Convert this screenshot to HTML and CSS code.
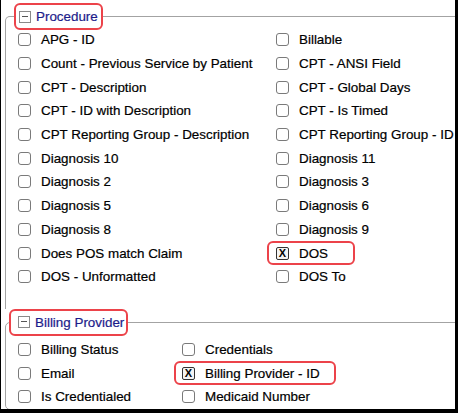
FILE: index.html
```html
<!DOCTYPE html>
<html lang="en">
<head>
  <meta charset="UTF-8">
  <title>Report Fields</title>
  <link rel="stylesheet" href="styles.css">
</head>
<body>
  <div class="frame">

    <fieldset class="group group-proc">
      <legend class="legend legend-proc"><span class="toggle"></span>Procedure</legend>
      <div class="fields fields-proc">
        <label class="item"><span class="cb"></span>APG - ID</label>
        <label class="item"><span class="cb"></span>Billable</label>
        <label class="item"><span class="cb"></span>Count - Previous Service by Patient</label>
        <label class="item"><span class="cb"></span>CPT - ANSI Field</label>
        <label class="item"><span class="cb"></span>CPT - Description</label>
        <label class="item"><span class="cb"></span>CPT - Global Days</label>
        <label class="item"><span class="cb"></span>CPT - ID with Description</label>
        <label class="item"><span class="cb"></span>CPT - Is Timed</label>
        <label class="item"><span class="cb"></span>CPT Reporting Group - Description</label>
        <label class="item"><span class="cb"></span>CPT Reporting Group - ID</label>
        <label class="item"><span class="cb"></span>Diagnosis 10</label>
        <label class="item"><span class="cb"></span>Diagnosis 11</label>
        <label class="item"><span class="cb"></span>Diagnosis 2</label>
        <label class="item"><span class="cb"></span>Diagnosis 3</label>
        <label class="item"><span class="cb"></span>Diagnosis 5</label>
        <label class="item"><span class="cb"></span>Diagnosis 6</label>
        <label class="item"><span class="cb"></span>Diagnosis 8</label>
        <label class="item"><span class="cb"></span>Diagnosis 9</label>
        <label class="item"><span class="cb"></span>Does POS match Claim</label>
        <label class="item mark mark-dos"><span class="cb checked">X</span>DOS</label>
        <label class="item"><span class="cb"></span>DOS - Unformatted</label>
        <label class="item"><span class="cb"></span>DOS To</label>
      </div>
    </fieldset>

    <fieldset class="group group-bill">
      <legend class="legend legend-bill"><span class="toggle"></span>Billing Provider</legend>
      <div class="fields fields-bill">
        <label class="item"><span class="cb"></span>Billing Status</label>
        <label class="item"><span class="cb"></span>Credentials</label>
        <label class="item"><span class="cb"></span>Email</label>
        <label class="item mark mark-bpid"><span class="cb checked">X</span>Billing Provider - ID</label>
        <label class="item"><span class="cb"></span>Is Credentialed</label>
        <label class="item"><span class="cb"></span>Medicaid Number</label>
      </div>
    </fieldset>

  </div>
</body>
</html>
```

FILE: styles.css
```css
* {
  box-sizing: border-box;
}

body {
  margin: 0;
  background: #fff;
  font-family: "Liberation Sans", Arial, sans-serif;
  color: #000;
}

.frame {
  width: 458px;
  height: 413px;
  overflow: hidden;
  border-left: 1px solid #000;
  border-right: 3px solid #000;
  border-bottom: 4px solid #000;
  padding-top: 3px;
}

.group {
  margin: 0 -20px 0 4px;
  padding: 0;
  border: 1px solid #a3a3a3;
  border-radius: 5px;
  min-width: 0;
}

.group-proc {
  border-bottom: none;
  border-bottom-left-radius: 0;
  padding-bottom: 20px;
}

.legend {
  display: flex;
  align-items: center;
  height: 27px;
  border: 2px solid #ec434a;
  border-radius: 6px;
  font-size: 13.4px;
  color: #1c1c8a;
  -webkit-text-stroke: 0.2px #1c1c8a;
}

.legend-proc {
  margin-left: 8px;
  padding: 0 3px 0 3px;
}

.legend-bill {
  margin-left: 3px;
  padding: 0 2px 0 7px;
}

.toggle {
  position: relative;
  width: 12px;
  height: 12px;
  border: 1px solid #8a8a8a;
  margin-right: 5px;
  background: #fff;
}

.toggle::after {
  content: "";
  position: absolute;
  left: 2px;
  right: 2px;
  top: 4px;
  height: 1px;
  background: #555;
}

.fields {
  display: grid;
  margin-top: -2px;
  padding-left: 12px;
}

.fields-proc {
  grid-template-columns: 258px 1fr;
}

.fields-bill {
  margin-top: 2px;
  grid-template-columns: 164px 1fr;
}

.item {
  position: relative;
  display: flex;
  align-items: center;
  height: 23.7px;
  font-size: 13.4px;
  white-space: nowrap;
  -webkit-text-stroke: 0.2px #000;
}

.cb {
  display: flex;
  align-items: center;
  justify-content: center;
  width: 13px;
  height: 13px;
  margin-right: 10px;
  border: 1px solid #7a7a7a;
  border-radius: 3px;
  background: #fff;
  font-size: 11px;
  font-weight: bold;
  line-height: 1;
  -webkit-text-stroke: 0;
}

.cb.checked {
  border-color: #333;
  border-radius: 2px;
  background: #f4f4f4;
}

.mark::after {
  content: "";
  position: absolute;
  top: 0;
  bottom: 0;
  border: 2px solid #ec434a;
  border-radius: 6px;
}

.mark-dos::after {
  left: -9px;
  width: 84px;
}

.mark-bpid::after {
  left: -8px;
  width: 158px;
}
```
